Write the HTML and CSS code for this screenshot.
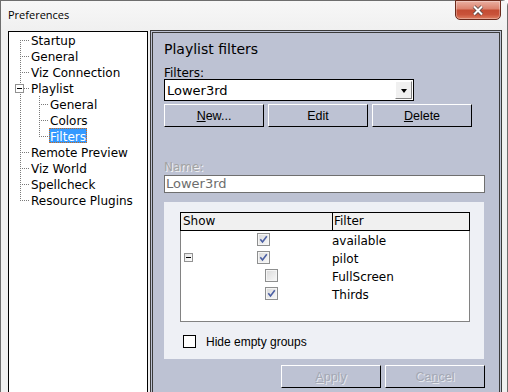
FILE: index.html
```html
<!DOCTYPE html>
<html lang="en">
<head>
  <meta charset="UTF-8">
  <meta name="viewport" content="width=device-width, initial-scale=1.0">
  <title>Preferences</title>
  <link rel="stylesheet" href="styles.css">
</head>
<body>
  <div class="window">
    <div class="titlebar">
      <span class="title">Preferences</span>
      <button class="close" aria-label="Close">
        <svg width="12" height="11" viewBox="0 0 12 11">
          <path d="M2 1.5 L10 9.5 M10 1.5 L2 9.5" stroke="#5b4a46" stroke-width="3.8" fill="none"/>
          <path d="M2 1.5 L10 9.5 M10 1.5 L2 9.5" stroke="#fff" stroke-width="2" fill="none"/>
        </svg>
      </button>
    </div>

    <div class="client">
      <!-- Settings tree -->
      <ul class="tree">
        <li class="node first"><span class="elbow"></span><span class="text">Startup</span></li>
        <li class="node"><span class="elbow"></span><span class="text">General</span></li>
        <li class="node"><span class="elbow"></span><span class="text">Viz Connection</span></li>
        <li class="node"><span class="elbow"><span class="toggle"></span></span><span class="text">Playlist</span></li>
        <li class="node child"><span class="pipe"></span><span class="elbow"></span><span class="text">General</span></li>
        <li class="node child"><span class="pipe"></span><span class="elbow"></span><span class="text">Colors</span></li>
        <li class="node child last"><span class="pipe"></span><span class="elbow"></span><span class="text selected">Filters</span></li>
        <li class="node"><span class="elbow"></span><span class="text">Remote Preview</span></li>
        <li class="node"><span class="elbow"></span><span class="text">Viz World</span></li>
        <li class="node"><span class="elbow"></span><span class="text">Spellcheck</span></li>
        <li class="node last"><span class="elbow"></span><span class="text">Resource Plugins</span></li>
      </ul>

      <!-- Filters page -->
      <div class="panel">
        <h2 class="heading">Playlist filters</h2>
        <div class="label">Filters:</div>
        <div class="combo">
          <span class="combo-text">Lower3rd</span>
          <span class="combo-btn"><span class="arrow"></span></span>
        </div>
        <div class="btn-row">
          <button class="btn"><u>N</u>ew...</button>
          <button class="btn">Edit</button>
          <button class="btn"><u>D</u>elete</button>
        </div>

        <div class="label disabled name-label">Name:</div>
        <div class="field">Lower3rd</div>

        <div class="group">
          <div class="listview">
            <div class="lv-head">
              <div class="col-show">Show</div>
              <div class="col-filter">Filter</div>
            </div>
            <div class="lv-row">
              <div class="cell-show"><span class="toggle-space"></span><span class="check on"><svg width="11" height="11" viewBox="0 0 11 11"><path d="M2.3 5.2 L4.5 8 L8.8 2.2" fill="none" stroke="#4b5fa3" stroke-width="1.6"/></svg></span></div>
              <div class="cell-filter">available</div>
            </div>
            <div class="lv-row">
              <div class="cell-show"><span class="toggle lv-toggle"></span><span class="check on"><svg width="11" height="11" viewBox="0 0 11 11"><path d="M2.3 5.2 L4.5 8 L8.8 2.2" fill="none" stroke="#4b5fa3" stroke-width="1.6"/></svg></span></div>
              <div class="cell-filter">pilot</div>
            </div>
            <div class="lv-row sub">
              <div class="cell-show"><span class="toggle-space"></span><span class="check"></span></div>
              <div class="cell-filter">FullScreen</div>
            </div>
            <div class="lv-row sub">
              <div class="cell-show"><span class="toggle-space"></span><span class="check on"><svg width="11" height="11" viewBox="0 0 11 11"><path d="M2.3 5.2 L4.5 8 L8.8 2.2" fill="none" stroke="#4b5fa3" stroke-width="1.6"/></svg></span></div>
              <div class="cell-filter">Thirds</div>
            </div>
          </div>
          <label class="hide-row"><span class="flat-box"></span>Hide empty groups</label>
        </div>

        <div class="footer">
          <button class="btn disabled"><u>A</u>pply</button>
          <button class="btn disabled">Ca<u>n</u>cel</button>
        </div>
      </div>
    </div>
  </div>
</body>
</html>
```

FILE: styles.css
```css
html, body {
  margin: 0;
  padding: 0;
}

body {
  width: 508px;
  height: 392px;
  overflow: hidden;
  font-family: "DejaVu Sans", sans-serif;
  font-size: 12px;
  color: #000;
}

.window {
  width: 508px;
  height: 392px;
  box-sizing: border-box;
  border: 1px solid #6e6e6e;
  border-bottom: none;
  border-top-right-radius: 6px;
  background: #f0f0f0;
  display: flex;
  flex-direction: column;
}

/* title bar */
.titlebar {
  height: 29px;
  flex: none;
  display: flex;
  align-items: flex-start;
  padding-left: 7px;
  background: linear-gradient(#f7f7f7, #f0f0f0);
}

.title {
  margin-top: 6px;
  font-family: "Open Sans", sans-serif;
  font-size: 11px;
  line-height: 15px;
}

.close {
  margin: -1px 6px 0 auto;
  width: 46px;
  height: 20px;
  padding: 0;
  border: 1px solid #6a2a1c;
  border-radius: 0 0 5px 5px;
  background: linear-gradient(#eab0a2 0%, #dc8470 42%, #c44c33 52%, #c9533a 75%, #df7f62 100%);
  box-shadow: inset 0 0 0 1px rgba(255, 255, 255, 0.3);
  display: flex;
  align-items: center;
  justify-content: center;
}

/* client area */
.client {
  flex: 1;
  display: flex;
  gap: 2px;
  padding-left: 7px;
  min-height: 0;
}

/* tree */
.tree {
  margin: 1px 0 0 0;
  padding: 0;
  list-style: none;
  width: 140px;
  box-sizing: border-box;
  border: 1px solid #000;
  border-bottom: none;
  background: #fff;
}

.node {
  display: flex;
  height: 16px;
  padding-left: 11px;
}

.node .text {
  line-height: 19px;
  height: 15px;
  padding: 0 1px;
  white-space: nowrap;
}

.node .text.selected {
  background: #3399ff;
  color: #fff;
  outline: 1px dotted #cc6a1c;
  outline-offset: -1px;
}

.elbow {
  flex: none;
  width: 10px;
  height: 16px;
  background-image:
    repeating-linear-gradient(#7a7a7a 0 1px, transparent 1px 2px),
    repeating-linear-gradient(to right, #7a7a7a 0 1px, transparent 1px 2px);
  background-size: 1px 100%, 100% 1px;
  background-position: 0 0, 0 8px;
  background-repeat: no-repeat;
}

.first .elbow {
  background-size: 1px 8px, 100% 1px;
  background-position: 0 8px, 0 8px;
}

.last .elbow {
  background-size: 1px 9px, 100% 1px;
}

.pipe {
  flex: none;
  width: 19px;
  height: 16px;
  background: repeating-linear-gradient(#7a7a7a 0 1px, transparent 1px 2px) 0 0 / 1px 100% no-repeat;
}

.toggle {
  display: block;
  width: 9px;
  height: 9px;
  box-sizing: border-box;
  margin: 4px 0 0 -5px;
  border: 1px solid #919191;
  background: linear-gradient(#000, #000) center / 5px 1px no-repeat, #fff;
}

/* right page */
.panel {
  width: 352px;
  box-sizing: border-box;
  border: 3px double #3a3a3a;
  border-bottom: none;
  background: #bdc2d3;
  padding: 0 13px 0 11px;
  display: flex;
  flex-direction: column;
  align-items: flex-start;
}

.heading {
  margin: 8px 0 0 0;
  font-size: 14px;
  line-height: 17px;
  font-weight: normal;
}

.label {
  margin-top: 9px;
  line-height: 12px;
}

.label.disabled {
  color: #a3a3a3;
  text-shadow: 1px 1px 0 #f4f4f4;
}

.name-label {
  margin-top: 34px;
  line-height: 13px;
}

.combo {
  width: 250px;
  height: 22px;
  box-sizing: border-box;
  border: 1px solid #000;
  background: #fff;
  display: flex;
  align-items: center;
  font-size: 13px;
}

.combo-text {
  padding-left: 2px;
}

.combo-btn {
  margin-left: auto;
  margin-right: 1px;
  width: 17px;
  height: 18px;
  box-sizing: border-box;
  border: 1px solid;
  border-color: #fff #808080 #808080 #fff;
  background: #f0f0f0;
  display: flex;
  align-items: center;
  justify-content: center;
}

.arrow {
  width: 0;
  height: 0;
  border-left: 3px solid transparent;
  border-right: 3px solid transparent;
  border-top: 4px solid #000;
  margin-top: 1px;
}

.btn-row {
  margin-top: 3px;
  display: flex;
  gap: 4px;
}

.btn {
  width: 100px;
  height: 23px;
  box-sizing: border-box;
  padding: 0;
  border: 1px solid;
  border-color: #fff #000 #000 #fff;
  background: #bdc2d3;
  font-family: "Liberation Sans", sans-serif;
  font-size: 12.5px;
  color: #000;
}

.btn.disabled {
  color: #a4a8b4;
  text-shadow: 1px 1px 0 #e6e8ee;
}

.field {
  margin-top: 1px;
  width: 321px;
  height: 18px;
  box-sizing: border-box;
  border: 1px solid #6f6f6f;
  background: #fff;
  color: #6d6d6d;
  font-size: 13px;
  line-height: 16px;
  padding-left: 1px;
}

/* filter list */
.group {
  margin-top: 9px;
  width: 320px;
  height: 157px;
  box-sizing: border-box;
  background: #eef0f5;
  padding: 10px 0 0 16px;
}

.listview {
  width: 290px;
  height: 110px;
  box-sizing: border-box;
  border: 1px solid #828282;
  background: #fff;
  padding-bottom: 1px;
}

.lv-head {
  display: flex;
  margin: -1px -1px 1px -1px;
  height: 19px;
  box-sizing: border-box;
  border: 1px solid #000;
  background: #f0f0f0;
  line-height: 17px;
}

.col-show {
  width: 152px;
  box-sizing: border-box;
  border-right: 1px solid #000;
  padding-left: 2px;
}

.col-filter {
  padding-left: 1px;
}

.lv-row {
  display: flex;
  height: 18px;
  line-height: 18px;
}

.cell-show {
  width: 151px;
  flex: none;
  display: flex;
  align-items: flex-start;
  padding-left: 3px;
  box-sizing: border-box;
}

.toggle-space {
  width: 9px;
  flex: none;
}

.lv-toggle {
  margin: 3px 0 0 0;
  border-color: #929292;
  background: linear-gradient(#000, #000) center / 5px 1px no-repeat, linear-gradient(135deg, #e4e4e4, #fdfdfd);
}

.check {
  width: 13px;
  height: 13px;
  box-sizing: border-box;
  margin: 1px 0 0 64px;
  border: 1px solid #8e8f8f;
  box-shadow: inset 0 0 0 1px #f5f5f5;
  background: linear-gradient(135deg, #d9d9d9, #f9f9f9);
  display: flex;
  align-items: center;
  justify-content: center;
}

.sub .check {
  margin-left: 72px;
}

.hide-row {
  margin: 13px 0 0 3px;
  display: flex;
  align-items: center;
  height: 13px;
  font-family: "Liberation Sans", sans-serif;
  font-size: 12px;
}

.flat-box {
  width: 13px;
  height: 13px;
  box-sizing: border-box;
  border: 1px solid #000;
  background: #fff;
  margin-right: 10px;
}

.footer {
  margin-top: 6px;
  width: 321px;
  display: flex;
  justify-content: flex-end;
  gap: 4px;
}
```
